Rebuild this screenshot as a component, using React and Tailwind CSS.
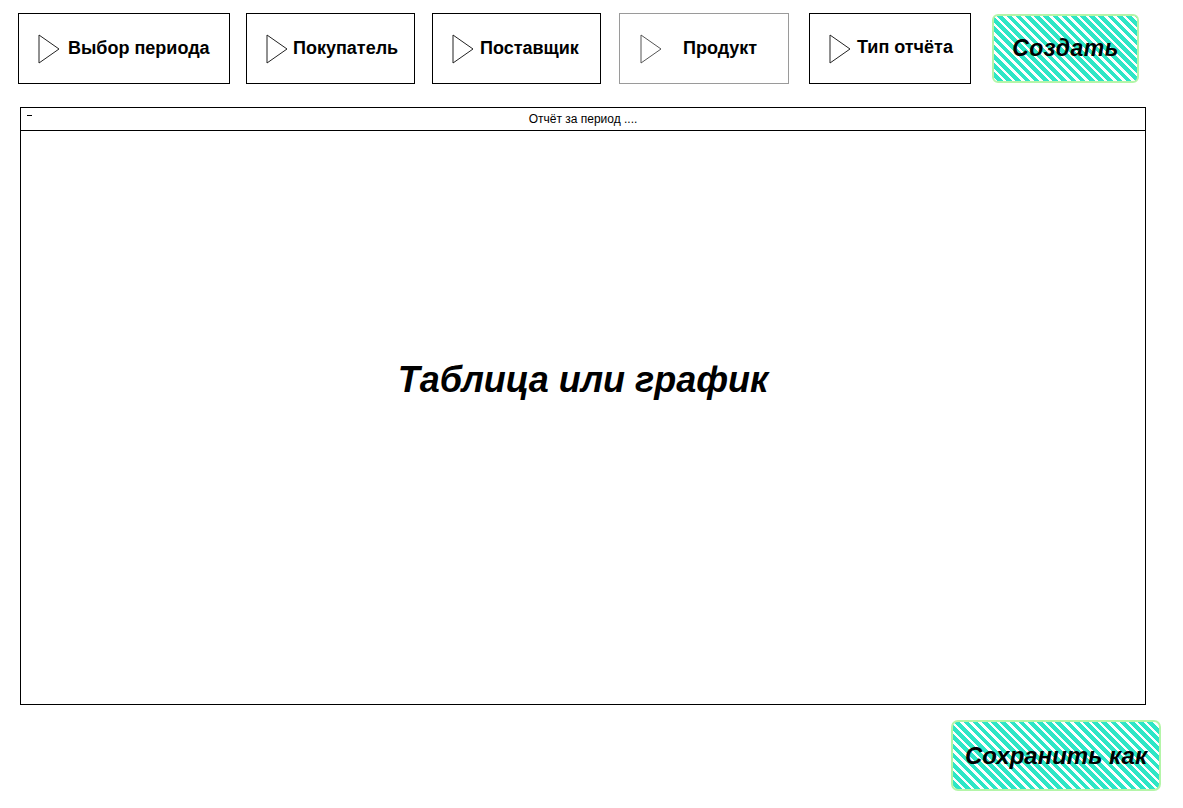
const stripes =
  "bg-[repeating-linear-gradient(45deg,#ffffff_0px,#ffffff_2.5px,#2ee6c6_2.5px,#2ee6c6_6.5px)]";

const Triangle = ({ gray }) => (
  <svg width="22" height="30" viewBox="0 0 22 30" className="shrink-0">
    <polygon
      points="1,1 21,15 1,29"
      fill="none"
      stroke={gray ? "#555" : "#222"}
      strokeWidth="1"
    />
  </svg>
);

const FilterButton = ({ label, className, textClass, gray }) => (
  <div
    className={`h-[71px] flex items-center bg-white border ${
      gray ? "border-[#9a9a9a]" : "border-black"
    } ${className}`}
  >
    <Triangle gray={gray} />
    <span className={`text-[18px] font-bold text-black ${textClass}`}>{label}</span>
  </div>
);

export default function App() {
  return (
    <div
      className="w-[1183px] h-[808px] bg-white relative overflow-hidden"
      style={{ fontFamily: '"Liberation Sans", Arial, sans-serif' }}
    >
      <div className="flex items-start pt-[13px] pl-[18px]">
        <FilterButton label="Выбор периода" className="w-[212px] pl-[19px]" textClass="ml-[8px]" />
        <FilterButton label="Покупатель" className="w-[169px] ml-[16px] pl-[19px]" textClass="ml-[5px]" />
        <FilterButton label="Поставщик" className="w-[169px] ml-[17px] pl-[19px]" textClass="ml-[6px]" />
        <FilterButton label="Продукт" className="w-[170px] ml-[18px] pl-[20px]" textClass="ml-[21px]" gray />
        <FilterButton label="Тип отчёта" className="w-[162px] ml-[20px] pl-[19px]" textClass="ml-[6px] -mt-[2px]" />
        <div
          className={`w-[147px] h-[69px] ml-[21px] mt-[1px] rounded-[6px] border-2 border-[#b4f5a8] flex items-center justify-center ${stripes}`}
        >
          <span className="text-[23px] font-bold italic text-black tracking-[0.5px]">Создать</span>
        </div>
      </div>

      <div className="ml-[20px] mt-[23px] w-[1126px] h-[598px] border border-black flex flex-col">
        <div className="h-[23px] border-b border-black relative flex items-center justify-center">
          <span className="absolute left-[6px] top-[7px] w-[5px] h-px bg-black" />
          <span className="text-[12px] text-black">Отчёт за период ....</span>
        </div>
        <div className="flex-1 flex justify-center pt-[229px]">
          <span className="text-[36px] leading-[40px] font-bold italic text-black">Таблица или график</span>
        </div>
      </div>

      <div className="flex justify-end pr-[22px] mt-[15px]">
        <div
          className={`w-[210px] h-[71px] rounded-[7px] border-2 border-[#b4f5a8] flex items-center justify-center ${stripes}`}
        >
          <span className="text-[24px] font-bold italic text-black">Сохранить как</span>
        </div>
      </div>
    </div>
  );
}
